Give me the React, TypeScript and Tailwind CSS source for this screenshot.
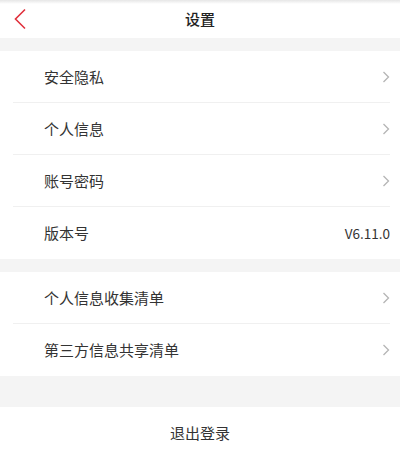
import React from 'react';

const font = { fontFamily: '"Noto Sans CJK SC", "Noto Sans", sans-serif' };

const Chevron = () => (
  <svg width="8" height="12" viewBox="0 0 8 12" fill="none" className="shrink-0">
    <path d="M1.5 1 L6.5 6 L1.5 11" stroke="#b5b5b5" strokeWidth="1.3" />
  </svg>
);

const Row = ({ label, value, last }: { label: string; value?: string; last?: boolean }) => (
  <div className="flex h-[52px] items-center pl-[44px] pr-[10px] relative">
    <span className="flex-1 text-[15px] text-[#333]">{label}</span>
    {value ? <span className="text-[13.5px] text-[#333]">{value}</span> : <Chevron />}
    {!last && <div className="absolute bottom-0 left-[13px] right-[10px] h-px bg-[#f0f0f0]" />}
  </div>
);

export default function App() {
  return (
    <div className="w-[400px] h-[456px] bg-white overflow-hidden" style={font}>
      <div className="relative h-[38px] flex items-center justify-center bg-white">
        <div className="absolute top-0 left-0 right-0 h-[4px] bg-gradient-to-b from-[#e6e6e6] to-white" />
        <svg width="14" height="22" viewBox="0 0 14 22" className="absolute left-[13px] top-[8px]">
          <path d="M12 1.5 L2.5 11 L12 20.5" stroke="#e0313d" strokeWidth="1.6" fill="none" />
        </svg>
        <span className="text-[15px] font-medium text-[#222]">设置</span>
      </div>
      <div className="h-[13px] bg-[#f4f4f4]" />
      <Row label="安全隐私" />
      <Row label="个人信息" />
      <Row label="账号密码" />
      <Row label="版本号" value="V6.11.0" last />
      <div className="h-[13px] bg-[#f4f4f4]" />
      <Row label="个人信息收集清单" />
      <Row label="第三方信息共享清单" last />
      <div className="h-[31px] bg-[#f4f4f4]" />
      <div className="h-[52px] flex items-center justify-center">
        <span className="text-[15px] text-[#333]">退出登录</span>
      </div>
    </div>
  );
}
